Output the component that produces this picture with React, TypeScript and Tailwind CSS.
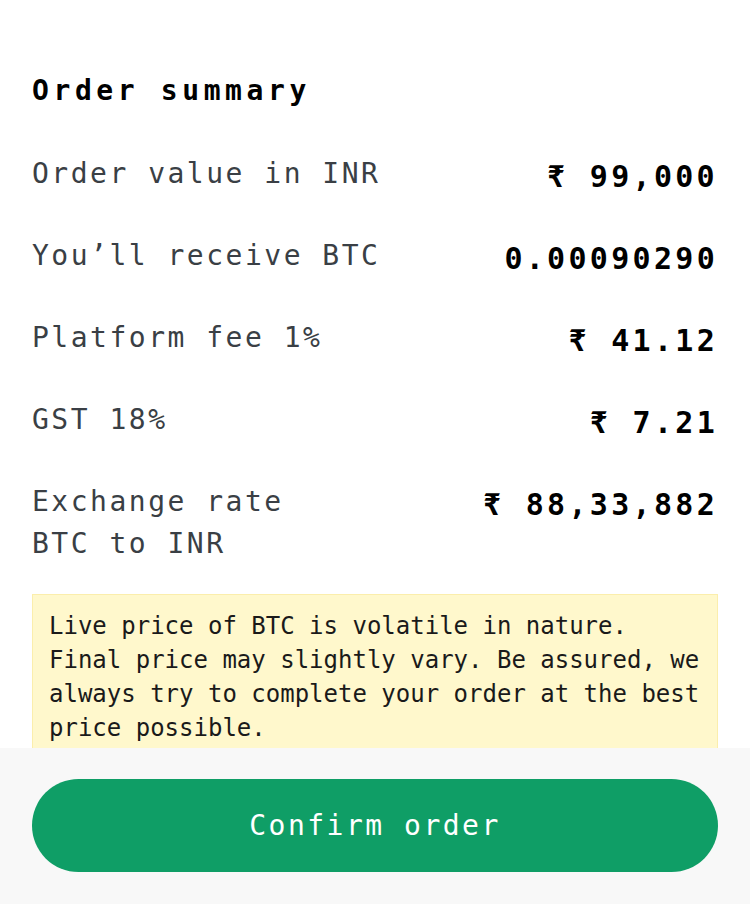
import React from "react";

const rows: { label: React.ReactNode; value: string }[] = [
  { label: "Order value in INR", value: "₹ 99,000" },
  { label: "You’ll receive BTC", value: "0.00090290" },
  { label: "Platform fee 1%", value: "₹ 41.12" },
  { label: "GST 18%", value: "₹ 7.21" },
  {
    label: (
      <>
        Exchange rate
        <br />
        BTC to INR
      </>
    ),
    value: "₹ 88,33,882",
  },
];

export default function App() {
  return (
    <div
      className="w-[750px] h-[904px] flex flex-col bg-white text-black"
      style={{ fontFamily: '"DejaVu Sans Mono", "Liberation Mono", monospace' }}
    >
      <div className="flex-1 overflow-hidden px-8 pt-[71px]">
        <h1 className="text-[28px] leading-[40px] font-bold tracking-[4.6px] text-black">
          Order summary
        </h1>
        <div className="mt-[42px] flex flex-col gap-[40px]">
          {rows.map((r, i) => (
            <div key={i} className="flex justify-between items-start">
              <div className="text-[28px] leading-[42px] tracking-[2.5px] text-[#3a3f45]">
                {r.label}
              </div>
              <div className="text-[30px] leading-[42px] translate-y-[3px] font-bold tracking-[3.3px] text-black">
                {r.value}
              </div>
            </div>
          ))}
        </div>
        <div className="mt-[29px] bg-[#fff8cc] border border-[#fbeeac] px-4 pt-[14px] pb-6 text-[24px] leading-[34px] text-[#1a1a1a]">
          Live price of BTC is volatile in nature. Final price may slightly vary. Be assured, we
          always try to complete your order at the best price possible.
        </div>
      </div>
      <div className="h-[156px] shrink-0 bg-[#f8f8f8] px-8 pt-[31px]">
        <button className="w-full h-[93px] rounded-full bg-[#0f9e66] text-white text-[28px] tracking-[2.5px] font-medium flex items-center justify-center">
          Confirm order
        </button>
      </div>
    </div>
  );
}
